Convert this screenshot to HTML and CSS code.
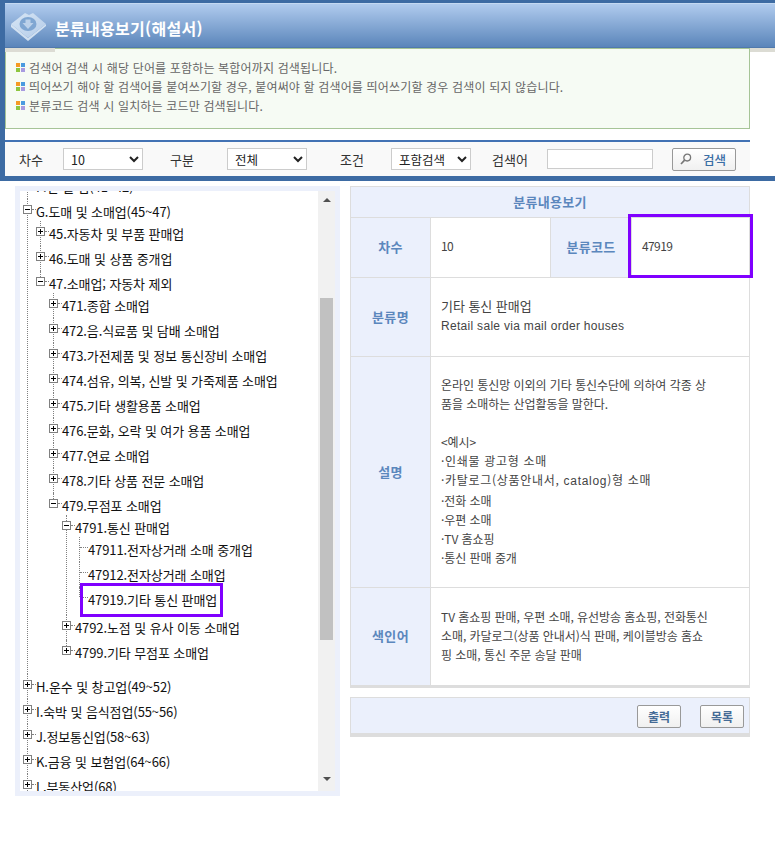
FILE: index.html
```html
<!DOCTYPE html>
<html lang="ko">
<head>
<meta charset="utf-8">
<title>분류내용보기(해설서)</title>
<link rel="stylesheet" href="styles.css">
</head>
<body>
<div class="frame">
  <div class="frame-inner">
    <header class="head">
      <svg class="logo" width="38" height="32" viewBox="0 0 38 32" aria-hidden="true">
        <defs>
          <linearGradient id="lg" x1="0" y1="0" x2="1" y2="1"><stop offset="0" stop-color="#d8e6f5"/><stop offset="1" stop-color="#b3cbe8"/></linearGradient>
        </defs>
        <path d="M1 14 L18 28 L36 14 L36 16 L18 31 L1 17 Z" fill="#e2ecf7" opacity=".85"/>
        <path d="M1 14 L15 3 L19 5 L23 3 L36 14 L18 28 Z" fill="url(#lg)"/>
        <ellipse cx="18" cy="14" rx="8.5" ry="7" fill="#7fa6d2"/>
        <path d="M15.5 9.5 H20.5 V13 H23.5 L18 19 L12.5 13 H15.5 Z" fill="#bcd1ea"/>
      </svg>
      <h1 class="title">분류내용보기(해설서)</h1>
      <span class="strip strip-l"></span>
      <span class="strip strip-r"></span>
    </header>
    <ul class="notice">
      <li><i class="sq"><b></b><b></b><b></b><b></b></i>검색어 검색 시 해당 단어를 포함하는 복합어까지 검색됩니다.</li>
      <li><i class="sq"><b></b><b></b><b></b><b></b></i>띄어쓰기 해야 할 검색어를 붙여쓰기할 경우, 붙여써야 할 검색어를 띄어쓰기할 경우 검색이 되지 않습니다.</li>
      <li><i class="sq"><b></b><b></b><b></b><b></b></i>분류코드 검색 시 일치하는 코드만 검색됩니다.</li>
    </ul>
    <form class="filter">
      <label class="lb lb1">차수</label>
      <select class="sel sel1"><option>10</option></select>
      <label class="lb lb2">구분</label>
      <select class="sel sel2"><option>전체</option></select>
      <label class="lb lb3">조건</label>
      <select class="sel sel3"><option>포함검색</option></select>
      <label class="lb lb4">검색어</label>
      <input class="kw" type="text">
      <button class="btn btn-search" type="button">
        <svg width="12" height="12" viewBox="0 0 12 12" aria-hidden="true"><circle cx="7.2" cy="4.6" r="3.4" fill="none" stroke="#777" stroke-width="1.3"/><path d="M4.6 7.2 L1 11" stroke="#777" stroke-width="1.7"/></svg>
        <span>검색</span>
      </button>
    </form>
  </div>
</div>

<main class="main">
  <section class="tree-panel">
    <div class="tree-view">
      <ul class="tree root">
        <li class="node"><div class="row"><i class="tog plus"></i><span>F.건 설 업(41~42)</span></div></li>
        <li class="node"><div class="row"><i class="tog"></i><span>G.도매 및 소매업(45~47)</span></div>
          <ul class="tree">
            <li class="node"><div class="row"><i class="tog plus"></i><span>45.자동차 및 부품 판매업</span></div></li>
            <li class="node"><div class="row"><i class="tog plus"></i><span>46.도매 및 상품 중개업</span></div></li>
            <li class="node"><div class="row"><i class="tog"></i><span>47.소매업; 자동차 제외</span></div>
              <ul class="tree">
                <li class="node"><div class="row"><i class="tog plus"></i><span>471.종합 소매업</span></div></li>
                <li class="node"><div class="row"><i class="tog plus"></i><span>472.음.식료품 및 담배 소매업</span></div></li>
                <li class="node"><div class="row"><i class="tog plus"></i><span>473.가전제품 및 정보 통신장비 소매업</span></div></li>
                <li class="node"><div class="row"><i class="tog plus"></i><span>474.섬유, 의복, 신발 및 가죽제품 소매업</span></div></li>
                <li class="node"><div class="row"><i class="tog plus"></i><span>475.기타 생활용품 소매업</span></div></li>
                <li class="node"><div class="row"><i class="tog plus"></i><span>476.문화, 오락 및 여가 용품 소매업</span></div></li>
                <li class="node"><div class="row"><i class="tog plus"></i><span>477.연료 소매업</span></div></li>
                <li class="node"><div class="row"><i class="tog plus"></i><span>478.기타 상품 전문 소매업</span></div></li>
                <li class="node"><div class="row"><i class="tog"></i><span>479.무점포 소매업</span></div>
                  <ul class="tree">
                    <li class="node"><div class="row"><i class="tog"></i><span>4791.통신 판매업</span></div>
                      <ul class="tree">
                        <li class="node"><div class="row leaf"><span>47911.전자상거래 소매 중개업</span></div></li>
                        <li class="node"><div class="row leaf"><span>47912.전자상거래 소매업</span></div></li>
                        <li class="node"><div class="row leaf"><span class="mark">47919.기타 통신 판매업</span></div></li>
                      </ul>
                    </li>
                    <li class="node"><div class="row"><i class="tog plus"></i><span>4792.노점 및 유사 이동 소매업</span></div></li>
                    <li class="node"><div class="row"><i class="tog plus"></i><span>4799.기타 무점포 소매업</span></div></li>
                  </ul>
                </li>
              </ul>
            </li>
          </ul>
        </li>
        <li class="node"><div class="row"><i class="tog plus"></i><span>H.운수 및 창고업(49~52)</span></div></li>
        <li class="node"><div class="row"><i class="tog plus"></i><span>I.숙박 및 음식점업(55~56)</span></div></li>
        <li class="node"><div class="row"><i class="tog plus"></i><span>J.정보통신업(58~63)</span></div></li>
        <li class="node"><div class="row"><i class="tog plus"></i><span>K.금융 및 보험업(64~66)</span></div></li>
        <li class="node"><div class="row"><i class="tog plus"></i><span>L.부동산업(68)</span></div></li>
      </ul>
    </div>
    <div class="scrollbar">
      <span class="arrow up"></span>
      <span class="thumb"></span>
      <span class="arrow down"></span>
    </div>
  </section>

  <section class="detail">
    <table class="info">
      <colgroup><col class="c1"><col class="c2"><col class="c3"><col class="c4"></colgroup>
      <tr class="r0"><th colspan="4">분류내용보기</th></tr>
      <tr class="r1"><th>차수</th><td class="num">10</td><th>분류코드</th><td class="mark-cell num">47919</td></tr>
      <tr class="r2"><th>분류명</th><td colspan="3"><span class="name">기타 통신 판매업</span><br><span class="en">Retail sale via mail order houses</span></td></tr>
      <tr class="r3"><th>설명</th><td colspan="3">온라인 통신망 이외의 기타 통신수단에 의하여 각종 상<br>품을 소매하는 산업활동을 말한다.<br><br>&lt;예시&gt;<br><span class="wide">·인쇄물 광고형 소매</span><br><span class="wide">·카탈로그(상품안내서, <span class="cat">catalog</span>)형 소매</span><br>·전화 소매<br>·우편 소매<br>·TV 홈쇼핑<br>·통신 판매 중개</td></tr>
      <tr class="r4"><th>색인어</th><td colspan="3">TV 홈쇼핑 판매, 우편 소매, 유선방송 홈쇼핑, 전화통신<br>소매, 카달로그(상품 안내서)식 판매, 케이블방송 홈쇼<br>핑 소매, 통신 주문 송달 판매</td></tr>
    </table>
    <div class="actions">
      <button class="btn act" type="button">출력</button>
      <button class="btn act" type="button">목록</button>
    </div>
  </section>
</main>
</body>
</html>
```
FILE: styles.css
```css
* { box-sizing: border-box; }
html, body { margin: 0; padding: 0; background: #fff; }
body {
  width: 775px;
  height: 856px;
  overflow: hidden;
  font-family: "Noto Sans CJK KR", "Liberation Sans", sans-serif;
  font-size: 12px;
  color: #444;
}
ul { list-style: none; margin: 0; padding: 0; }

/* top frame */
.frame { background: #3d6ba3; padding: 3px 0 5px 5px; }
.frame-inner { background: #fff; }
.head {
  position: relative;
  height: 45px;
  display: flex;
  align-items: center;
  background: linear-gradient(#b0cbee, #5a85ba);
  border-top: 1px solid #c4d9f2;
  border-bottom: 1px solid #5079ac;
}
.logo { margin: 0 7px 0 5px; flex: none; }
.title { margin: 5px 0 0; font-size: 16px; font-weight: 700; color: #fff; line-height: 20px; letter-spacing: .3px; }
.strip { position: absolute; top: 44px; height: 4px; background: #dcdcd4; }
.strip-l { left: 0; width: 50px; }
.strip-r { left: 745px; right: 0; }

.notice {
  width: 745px;
  height: 81px;
  padding: 9px 10px 0;
  background: #f6fbf4;
  border: 1px solid #a6c497;
  color: #666;
  line-height: 19px;
  letter-spacing: .16px;
}
.notice li { display: flex; align-items: center; white-space: nowrap; }
.sq {
  display: grid;
  grid-template-columns: 4px 4px;
  grid-template-rows: 4px 4px;
  gap: 1px;
  margin-right: 4px;
}
.sq b:nth-child(1) { background: #f59a23; }
.sq b:nth-child(2) { background: #4a9be0; }
.sq b:nth-child(3) { background: #8dc63f; }
.sq b:nth-child(4) { background: #a89be0; }

.filter {
  width: 745px;
  height: 36px;
  margin-top: 11px;
  border-top: 2px solid #4272b4;
  background: #f9f9f9;
  display: flex;
  align-items: center;
  color: #333;
  font-size: 13px;
}
.lb { display: block; }
.lb1 { margin-left: 14px; width: 44px; }
.lb2 { margin-left: 27px; width: 57px; }
.lb3 { margin-left: 33px; width: 51px; }
.lb4 { margin-left: 21px; width: 55px; }
.sel {
  width: 80px;
  height: 22px;
  border: 1px solid #ccc;
  background-color: #fff;
  font: 12.5px "Noto Sans CJK KR", "Liberation Sans", sans-serif;
  color: #222;
  padding: 0 0 0 3px;
}
.kw { width: 106px; height: 20px; border: 1px solid #ccc; background: #fff; padding: 0; }
.btn {
  display: inline-flex;
  align-items: center;
  justify-content: center;
  border: 1px solid #999;
  border-radius: 2px;
  background: linear-gradient(#fff, #f0f0f0);
  font: 700 12px "Noto Sans CJK KR", "Liberation Sans", sans-serif;
  color: #456b96;
  padding: 0;
}
.btn-search {
  width: 64px;
  height: 23px;
  margin-left: 19px;
  justify-content: flex-start;
  padding-left: 7px;
  gap: 11px;
  font-size: 12.5px;
  font-weight: 500;
  color: #3a6ea5;
}

/* main */
.main { display: flex; gap: 10px; padding: 5px 0 0 15px; }

/* tree */
.tree-panel {
  width: 325px;
  height: 610px;
  padding: 5px;
  background: #ecf0fb;
  display: flex;
}
.tree-view { flex: 1; background: #fff; overflow: hidden; min-width: 0; }
.tree { margin: -3px 0 0 13px; padding-bottom: 3px; }
.root { margin: -17px 0 0 7px; }
.node { position: relative; }
.node::before {
  content: "";
  position: absolute;
  left: 0;
  top: 0;
  bottom: 0;
  border-left: 1px dotted #808080;
}
.tree:not(.root) > .node:last-child::before { bottom: auto; height: 10px; }
.row {
  position: relative;
  height: 25px;
  line-height: 25px;
  padding-left: 9px;
  white-space: nowrap;
  font-size: 13px;
  letter-spacing: -.1px;
  color: #111;
}
.row::before {
  content: "";
  position: absolute;
  left: 5px;
  top: 10px;
  width: 4px;
  border-top: 1px dotted #808080;
}
.leaf::before { left: 1px; width: 8px; }
.tog {
  position: absolute;
  left: -4px;
  top: 6px;
  width: 9px;
  height: 9px;
  border: 1px solid #808080;
  background: #fff;
  z-index: 1;
}
.tog::before {
  content: "";
  position: absolute;
  left: 1px;
  top: 3px;
  width: 5px;
  height: 1px;
  background: #000;
}
.plus::after {
  content: "";
  position: absolute;
  left: 3px;
  top: 1px;
  width: 1px;
  height: 5px;
  background: #000;
}
.mark { position: relative; display: inline-block; }
.mark::after {
  content: "";
  position: absolute;
  left: -8px;
  right: -6px;
  top: -4px;
  bottom: -5px;
  border: 3px solid #8000ff;
}

/* scrollbar */
.scrollbar {
  width: 17px;
  flex: none;
  background: #f1f1f1;
  display: flex;
  flex-direction: column;
  align-items: center;
  height: 600px;
}
.arrow { width: 0; height: 0; border-left: 4px solid transparent; border-right: 4px solid transparent; }
.up { border-bottom: 4px solid #505050; margin-top: 7px; }
.down { border-top: 4px solid #505050; margin-top: 137px; }
.thumb { width: 13px; height: 342px; background: #c1c1c1; margin-top: 96px; }

/* detail */
.detail { width: 400px; }
.info {
  width: 400px;
  table-layout: fixed;
  border-collapse: collapse;
  border-bottom: 3px solid #ddd;
}
.c1 { width: 80px; }
.c2 { width: 120px; }
.c3 { width: 81px; }
.info th, .info td { border: 1px solid #ddd; }
.info th {
  background: #ebf0fc;
  color: #5b87bd;
  font-size: 13px;
  font-weight: 700;
  letter-spacing: .3px;
  text-align: center;
  padding: 0 0 2px;
}
.info td {
  background: #fff;
  padding: 0 10px 2px;
  line-height: 19px;
  color: #444;
  letter-spacing: -.05px;
  vertical-align: middle;
  white-space: nowrap;
}
.info td.num { letter-spacing: -.6px; padding-bottom: 4px; }
.name { font-size: 13px; }
.en { font-family: "Liberation Sans", sans-serif; letter-spacing: .3px; }
.wide { letter-spacing: .7px; }
.cat { font-family: "Liberation Sans", sans-serif; }
.r0 { height: 31px; }
.r1 { height: 60px; }
.r2 { height: 79px; }
.r3 { height: 231px; }
.r4 { height: 99px; }
.mark-cell { position: relative; }
.mark-cell::after {
  content: "";
  position: absolute;
  left: -4px;
  right: -4px;
  top: -4px;
  bottom: -1px;
  border: 3px solid #8000ff;
}
.actions {
  margin-top: 9px;
  height: 40px;
  padding-top: 7px;
  padding-right: 5px;
  background: #ebf0fc;
  border-top: 1px solid #ddd;
  border-left: 1px solid #ddd;
  border-right: 1px solid #ddd;
  border-bottom: 4px solid #ddd;
  display: flex;
  justify-content: flex-end;
  align-items: flex-start;
  gap: 19px;
}
.act { width: 44px; height: 23px; }
```
